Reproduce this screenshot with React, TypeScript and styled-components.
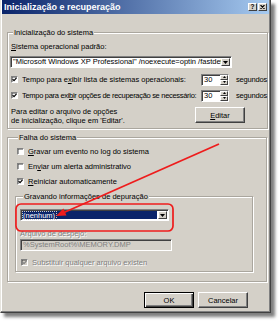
import React from "react";
import styled, { createGlobalStyle } from "styled-components";

const GlobalStyle = createGlobalStyle`
  html, body {
    margin: 0;
    padding: 0;
    background: #fff;
  }
  body {
    font-family: "Liberation Sans", Arial, sans-serif;
  }
`;

const Page = styled.div`
  position: relative;
  width: 280px;
  height: 321px;
  overflow: hidden;
`;

const Window = styled.div`
  box-sizing: border-box;
  width: 271px;
  height: 313px;
  background: #d4d0c8;
  border-left: 1px solid #e6e4de;
  border-right: 1px solid #404040;
  border-bottom: 1px solid #404040;
  box-shadow: inset -1px -1px 0 #808080, inset 1px 0 0 #fff,
    4px 4px 3px rgba(0, 0, 0, 0.5);
  display: flex;
  flex-direction: column;
  font-size: 7.5px;
  line-height: 9px;
  color: #000;
`;

const TitleBar = styled.div`
  height: 14px;
  margin: 0 1px;
  padding: 0 2px 0 2px;
  display: flex;
  align-items: center;
  justify-content: space-between;
  background: linear-gradient(to right, #0a246a, #a6caf0);
`;

const Title = styled.span`
  color: #fff;
  font-weight: bold;
  font-size: 9px;
  white-space: nowrap;
`;

const CaptionButtons = styled.div`
  display: flex;
  gap: 1px;
`;

const CaptionButton = styled.span`
  box-sizing: border-box;
  width: 9px;
  height: 8px;
  background: #d4d0c8;
  border: 1px solid;
  border-color: #fff #404040 #404040 #fff;
  display: flex;
  align-items: center;
  justify-content: center;
  font-size: 6.5px;
  font-weight: bold;
  line-height: 6px;
`;

const Body = styled.div`
  flex: 1;
  display: flex;
  flex-direction: column;
  padding: 14px 2px 0 6px;
`;

const Group = styled.fieldset<{ $pad: string; $w?: number }>`
  margin: 0;
  padding: ${(p) => p.$pad};
  width: ${(p) => (p.$w ? `${p.$w}px` : "auto")};
  box-sizing: border-box;
  min-width: 0;
  border: 1px solid #aaa69e;
  box-shadow: inset 1px 1px 0 #fff, 1px 1px 0 #fff;
  display: flex;
  flex-direction: column;
`;

const Legend = styled.legend`
  padding: 0 1px;
  margin-left: 3px;
  background: #d4d0c8;
  line-height: 9px;
  white-space: nowrap;
`;

const Label = styled.div<{ $disabled?: boolean }>`
  white-space: nowrap;
  color: ${(p) => (p.$disabled ? "#808080" : "#000")};
  text-shadow: ${(p) => (p.$disabled ? "1px 1px 0 #fff" : "none")};
`;

const U = styled.span`
  text-decoration: underline;
  text-decoration-thickness: 0.5px;
  text-underline-offset: 1px;
`;

const Field = styled.div<{ $w: number; $disabled?: boolean }>`
  display: flex;
  box-sizing: border-box;
  width: ${(p) => p.$w}px;
  height: 12px;
  background: ${(p) => (p.$disabled ? "#d4d0c8" : "#fff")};
  border: 1px solid;
  border-color: #808080 #fff #fff #808080;
  box-shadow: inset 1px 1px 0 #404040;
`;

const FieldText = styled.span<{ $disabled?: boolean }>`
  flex: 1;
  overflow: hidden;
  white-space: nowrap;
  padding: 1px 0 0 2px;
  line-height: 8px;
  color: ${(p) => (p.$disabled ? "#808080" : "#000")};
`;

const Selected = styled.span`
  flex: 1;
  margin: 1px;
  background: #0a246a;
  color: #fff;
  display: flex;
  align-items: center;
`;

const FocusText = styled.span`
  border: 1px dotted #c8c8c8;
  line-height: 7px;
  padding: 0 1px 0 0;
  white-space: nowrap;
`;

const DropButton = styled.span`
  box-sizing: border-box;
  width: 9px;
  margin: 1px 1px 1px 0;
  background: #d4d0c8;
  border: 1px solid;
  border-color: #fff #404040 #404040 #fff;
  display: flex;
  align-items: center;
  justify-content: center;
`;

const CheckBoxBox = styled.span<{ $disabled?: boolean }>`
  box-sizing: border-box;
  flex: none;
  width: 7px;
  height: 7px;
  background: ${(p) => (p.$disabled ? "#d4d0c8" : "#fff")};
  border: 1px solid;
  border-color: #808080 #fff #fff #808080;
  box-shadow: inset 0.5px 0.5px 0 #404040;
  display: flex;
  align-items: center;
  justify-content: center;
`;

const CheckRow = styled.div<{ $indent: number; $top: number }>`
  display: flex;
  align-items: center;
  gap: 4px;
  height: 11px;
  margin: ${(p) => p.$top}px 0 0 ${(p) => p.$indent}px;
  white-space: nowrap;
`;

const RowText = styled.span<{ $tight?: boolean }>`
  flex: 1;
  overflow: hidden;
  white-space: nowrap;
  letter-spacing: ${(p) => (p.$tight ? "-0.3px" : "0")};
`;

const SpinValue = styled.span`
  flex: 1;
  padding: 1px 0 0 2px;
  line-height: 8px;
`;

const SpinButtons = styled.span`
  width: 8px;
  display: flex;
  flex-direction: column;
`;

const SpinHalf = styled.span`
  flex: 1;
  box-sizing: border-box;
  background: #d4d0c8;
  border: 1px solid;
  border-color: #fff #404040 #404040 #fff;
  display: flex;
  align-items: center;
  justify-content: center;
`;

const Unit = styled.span`
  width: 31px;
  margin-left: 3px;
  white-space: nowrap;
  letter-spacing: -0.2px;
`;

const EditRow = styled.div`
  display: flex;
  justify-content: space-between;
  align-items: flex-start;
  margin: 6px 22px 0 1px;
`;

const Button = styled.button<{ $default?: boolean }>`
  box-sizing: border-box;
  width: 50px;
  height: 16px;
  padding: 0;
  font-family: "Liberation Sans", Arial, sans-serif;
  font-size: 7.5px;
  color: #000;
  background: #d4d0c8;
  border: 1px solid;
  border-color: ${(p) =>
    p.$default ? "#000" : "#fff #404040 #404040 #fff"};
  box-shadow: ${(p) =>
    p.$default
      ? "inset 1px 1px 0 #fff, inset -1px -1px 0 #404040, inset -2px -2px 0 #808080"
      : "inset -1px -1px 0 #808080"};
`;

const Footer = styled.div`
  display: flex;
  justify-content: flex-end;
  gap: 4px;
  margin: 10px 20px 0 0;
`;

const Overlay = styled.svg`
  position: absolute;
  left: 0;
  top: 0;
  pointer-events: none;
`;

function Check({ checked, disabled }: { checked?: boolean; disabled?: boolean }) {
  return (
    <CheckBoxBox $disabled={disabled}>
      {checked && (
        <svg width="5" height="5" viewBox="0 0 5 5">
          <path
            d="M0.6 2.2 L2 3.6 L4.5 0.9"
            fill="none"
            stroke={disabled ? "#808080" : "#000"}
            strokeWidth="1.2"
          />
        </svg>
      )}
    </CheckBoxBox>
  );
}

function DownArrow() {
  return (
    <svg width="5" height="3" viewBox="0 0 5 3">
      <path d="M0 0 H5 L2.5 3 Z" fill="#000" />
    </svg>
  );
}

function SpinBox() {
  return (
    <Field $w={28}>
      <SpinValue>30</SpinValue>
      <SpinButtons>
        <SpinHalf>
          <svg width="3" height="2" viewBox="0 0 3 2">
            <path d="M0 2 H3 L1.5 0 Z" fill="#000" />
          </svg>
        </SpinHalf>
        <SpinHalf>
          <svg width="3" height="2" viewBox="0 0 3 2">
            <path d="M0 0 H3 L1.5 2 Z" fill="#000" />
          </svg>
        </SpinHalf>
      </SpinButtons>
    </Field>
  );
}

export default function App() {
  return (
    <Page>
      <GlobalStyle />
      <Window>
        <TitleBar>
          <Title>Inicialização e recuperação</Title>
          <CaptionButtons>
            <CaptionButton>?</CaptionButton>
            <CaptionButton>
              <svg width="5" height="4" viewBox="0 0 5 4">
                <path d="M0.5 0 L4.5 4 M4.5 0 L0.5 4" stroke="#000" strokeWidth="1.1" />
              </svg>
            </CaptionButton>
          </CaptionButtons>
        </TitleBar>
        <Body>
          <Group $pad="0 0 3px 2px">
            <Legend>Inicialização do sistema</Legend>
            <Label style={{ marginTop: 5, marginLeft: 1 }}>
              <U>S</U>istema operacional padrão:
            </Label>
            <Field $w={222} style={{ marginTop: 5 }}>
              <FieldText>"Microsoft Windows XP Professional" /noexecute=optin /fastdetect</FieldText>
              <DropButton>
                <DownArrow />
              </DropButton>
            </Field>
            <CheckRow $indent={1} $top={6}>
              <Check checked />
              <RowText>
                Tempo para e<U>x</U>ibir lista de sistemas operacionais:
              </RowText>
              <SpinBox />
              <Unit>segundos</Unit>
            </CheckRow>
            <CheckRow $indent={1} $top={5}>
              <Check checked />
              <RowText $tight>
                Tempo para exi<U>b</U>ir opções de recuperação se necessário:
              </RowText>
              <SpinBox />
              <Unit>segundos</Unit>
            </CheckRow>
            <EditRow>
              <Label>
                Para editar o arquivo de opções
                <br />
                de inicialização, clique em 'Editar'.
              </Label>
              <Button>
                <U>E</U>ditar
              </Button>
            </EditRow>
          </Group>

          <Group $pad="0 0 9px 7px" style={{ marginTop: 4, marginRight: 1 }}>
            <Legend>Falha do sistema</Legend>
            <CheckRow $indent={2} $top={4}>
              <Check />
              <span>
                <U>G</U>ravar um evento no log do sistema
              </span>
            </CheckRow>
            <CheckRow $indent={2} $top={4}>
              <Check />
              <span>
                En<U>v</U>iar um alerta administrativo
              </span>
            </CheckRow>
            <CheckRow $indent={2} $top={4}>
              <Check checked />
              <span>
                <U>R</U>einiciar automaticamente
              </span>
            </CheckRow>

            <Group $pad="0 0 3px 4px" $w={238} style={{ marginTop: 5 }}>
              <Legend>Gravando informações de depuração</Legend>
              <Field $w={149} style={{ marginTop: 8 }}>
                <Selected>
                  <FocusText>(nenhum)</FocusText>
                </Selected>
                <DropButton>
                  <DownArrow />
                </DropButton>
              </Field>
              <Label $disabled style={{ marginTop: 8 }}>
                Arquivo de despejo:
              </Label>
              <Field $w={152} $disabled style={{ marginTop: 1 }}>
                <FieldText $disabled>%SystemRoot%\MEMORY.DMP</FieldText>
              </Field>
              <CheckRow $indent={1} $top={6}>
                <Check checked disabled />
                <Label $disabled style={{ width: 115, overflow: "hidden" }}>
                  Substituir qualquer arquivo existente
                </Label>
              </CheckRow>
            </Group>
          </Group>

          <Footer>
            <Button $default>OK</Button>
            <Button>Cancelar</Button>
          </Footer>
        </Body>
      </Window>

      <Overlay width="280" height="321" viewBox="0 0 280 321">
        <rect x="16" y="204" width="157" height="27" rx="5" fill="none" stroke="#ee1c1c" strokeWidth="1.7" />
        <line x1="219" y1="144" x2="64" y2="212.5" stroke="#ee1c1c" strokeWidth="1.8" />
        <polygon points="56,216 66.5,215.6 63.4,208.4" fill="#ee1c1c" />
      </Overlay>
    </Page>
  );
}
